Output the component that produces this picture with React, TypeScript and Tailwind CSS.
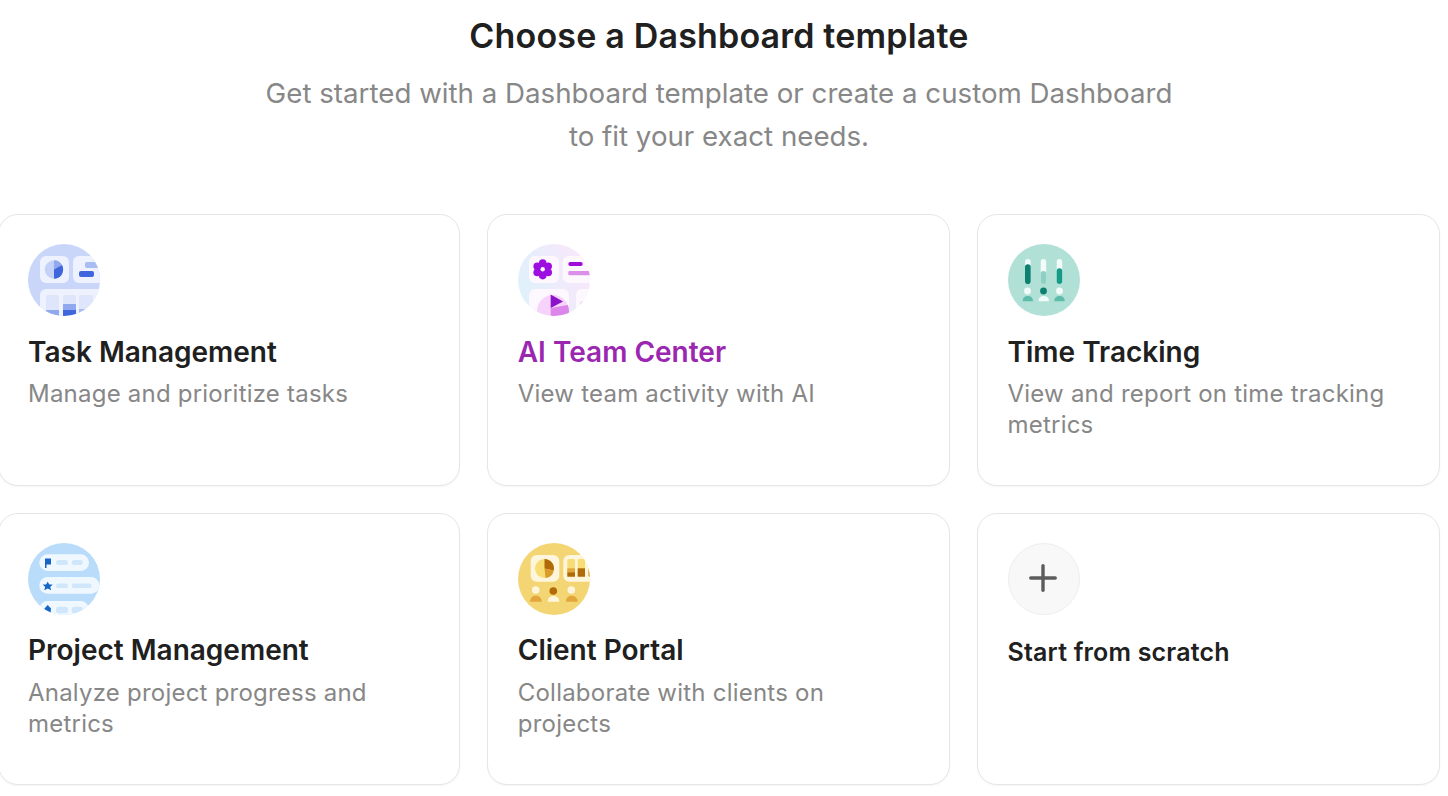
import React from 'react';
import { Plus } from 'lucide-react';

const IconFrame = ({ id, bg, children }: { id: string; bg: string; children: React.ReactNode }) => (
  <svg width="72" height="72" viewBox="0 0 72 72" className="block shrink-0">
    <defs>
      <clipPath id={`${id}-clip`}>
        <circle cx="36" cy="36" r="36" />
      </clipPath>
      <linearGradient id={`${id}-bg`} x1="0" y1="0.6" x2="1" y2="0.2">
        <stop offset="0" stopColor="#dff1fb" />
        <stop offset="1" stopColor="#fbe6fb" />
      </linearGradient>
    </defs>
    <g clipPath={`url(#${id}-clip)`}>
      <rect width="72" height="72" fill={bg} />
      {children}
    </g>
  </svg>
);

const TaskIcon = () => (
  <IconFrame id="task" bg="#c9d6fa">
    <rect x="12" y="12" width="29" height="27" rx="6" fill="#eef2fe" />
    <circle cx="26" cy="25.5" r="9.3" fill="#c5d2f7" />
    <path d="M26 25.5V16.2A9.3 9.3 0 0 1 34 21L26 25.5Z" fill="#8fa8ee" />
    <path d="M26 25.5L34 21A9.3 9.3 0 0 1 26 34.8Z" fill="#3f66dc" />
    <rect x="45" y="12" width="36" height="27" rx="6" fill="#eef2fe" />
    <rect x="57" y="18" width="14" height="6" rx="2" fill="#a9bcf3" />
    <rect x="51" y="27" width="15" height="6" rx="2" fill="#3f66dc" />
    <rect x="12" y="45" width="66" height="36" rx="6" fill="#eef2fe" />
    <rect x="18" y="51" width="13" height="24" rx="2" fill="#dfe6fc" />
    <rect x="18" y="66" width="13" height="9" fill="#8fa8ee" />
    <rect x="35" y="51" width="13" height="24" rx="2" fill="#dfe6fc" />
    <rect x="35" y="60" width="13" height="6" fill="#8fa8ee" />
    <rect x="35" y="66" width="13" height="9" fill="#3f66dc" />
    <rect x="51" y="51" width="14" height="24" rx="2" fill="#dfe6fc" />
    <rect x="51" y="65" width="14" height="10" fill="#a9bcf3" />
  </IconFrame>
);

const AiIcon = () => (
  <IconFrame id="ai" bg="url(#ai-bg)">
    <rect x="11" y="12" width="30" height="27" rx="6" fill="#fdf8fe" />
    <g fill="#9d0fe0">
      <circle cx="24.7" cy="19" r="3.8" />
      <circle cx="24.7" cy="31.6" r="3.8" />
      <circle cx="19.2" cy="22.2" r="3.8" />
      <circle cx="30.2" cy="22.2" r="3.8" />
      <circle cx="19.2" cy="28.4" r="3.8" />
      <circle cx="30.2" cy="28.4" r="3.8" />
      <circle cx="24.7" cy="25.3" r="5" />
    </g>
    <circle cx="24.7" cy="25.3" r="2.2" fill="#fdf8fe" />
    <rect x="44.7" y="12" width="36" height="27" rx="6" fill="#fdf8fe" />
    <rect x="50.3" y="18" width="14.4" height="4" rx="2" fill="#a00ad8" />
    <rect x="50.3" y="27" width="24" height="4.3" rx="1" fill="#db8fe8" />
    <rect x="11" y="45" width="40" height="36" rx="6" fill="#fdf8fe" />
    <circle cx="35" cy="67" r="16" fill="#f6d3fa" />
    <path d="M32.7 64V50.6L45 57.6Z" fill="#8b12c8" />
    <path d="M32.7 64L49.8 61A16 16 0 0 1 36 83H32.7Z" fill="#dc85ea" />
    <rect x="58" y="45" width="24" height="36" rx="6" fill="#fdf8fe" />
    <circle cx="65" cy="60" r="3" fill="#f6cdf8" />
  </IconFrame>
);

const TimeIcon = () => (
  <IconFrame id="time" bg="#b0e0d6">
    <rect x="17" y="15" width="5.7" height="25" rx="2.8" fill="#f2fbf9" />
    <rect x="17" y="20.3" width="5.7" height="19.7" rx="2.8" fill="#0d8070" />
    <rect x="32.7" y="15" width="5.5" height="25" rx="2.7" fill="#f2fbf9" />
    <rect x="32.7" y="27" width="5.5" height="13" rx="2.7" fill="#8ed0c3" />
    <rect x="48.7" y="15" width="5.5" height="25" rx="2.7" fill="#f2fbf9" />
    <rect x="48.7" y="24.3" width="5.5" height="15.7" rx="2.7" fill="#159a86" />
    <circle cx="19.5" cy="47" r="3.4" fill="#f2fbf9" />
    <path d="M14.7 57.2C14.7 53.5 16.8 52 19.8 52C22.8 52 25 53.5 25 57.2Z" fill="#5dbdaa" />
    <circle cx="35.5" cy="47" r="3.4" fill="#0d8070" />
    <path d="M30.5 57.2C30.5 53.5 32.8 52 35.7 52C38.6 52 41 53.5 41 57.2Z" fill="#f2fbf9" />
    <circle cx="51.5" cy="47" r="3.4" fill="#f2fbf9" />
    <path d="M46.3 57.2C46.3 53.5 48.5 52 51.5 52C54.5 52 56.7 53.5 56.7 57.2Z" fill="#5dbdaa" />
  </IconFrame>
);

const ProjectIcon = () => (
  <IconFrame id="project" bg="#b9dcfa">
    <rect x="11.3" y="11.3" width="49.7" height="16.7" rx="8.3" fill="#f0f8ff" />
    <path d="M17 15.5H23V21.5H18.5V25H17Z" fill="#1565c8" />
    <rect x="28" y="17" width="12" height="5" rx="2.5" fill="#cfe6fb" />
    <rect x="43.7" y="17" width="11" height="5" rx="2.5" fill="#cfe6fb" />
    <rect x="11.3" y="34" width="60" height="16.7" rx="8.3" fill="#f0f8ff" />
    <path d="M19.7 38.8L21.3 41.5H24.7L22.2 44L23.2 47.2L19.7 45.5L16.2 47.2L17.2 44L14.7 41.5H18.1Z" fill="#1565c8" />
    <rect x="28" y="40.5" width="12" height="4.5" rx="2.2" fill="#cfe6fb" />
    <rect x="43.7" y="40.5" width="20" height="4.5" rx="2.2" fill="#cfe6fb" />
    <rect x="11.3" y="58" width="49.7" height="16.7" rx="8.3" fill="#f0f8ff" />
    <path d="M19.7 62L23 65.5L22.5 70H17L16.5 65.5Z" fill="#1565c8" />
    <rect x="28" y="63.7" width="12" height="6.5" rx="2.5" fill="#cfe6fb" />
    <rect x="43.7" y="63.7" width="11" height="6.5" rx="2.5" fill="#cfe6fb" />
  </IconFrame>
);

const ClientIcon = () => (
  <IconFrame id="client" bg="#f3d574">
    <rect x="12.7" y="12" width="28.6" height="26.7" rx="6" fill="#fdf6dc" />
    <circle cx="26.5" cy="25.5" r="9.5" fill="#f8dd75" />
    <path d="M26.5 25.5V16A9.5 9.5 0 0 1 35.8 27.5Z" fill="#b06a08" />
    <path d="M26.5 25.5L35.8 27.5A9.5 9.5 0 0 1 27.5 35Z" fill="#d99b2b" />
    <rect x="45.3" y="12" width="36" height="26.7" rx="6" fill="#fdf6dc" />
    <rect x="49.3" y="16" width="7.7" height="17.7" rx="1.5" fill="#f8dd75" />
    <rect x="49.3" y="25.3" width="7.7" height="4" fill="#e0a93a" />
    <rect x="49.3" y="29.3" width="7.7" height="4.4" fill="#b06a08" />
    <rect x="59.7" y="16" width="7.3" height="17.7" rx="1.5" fill="#f8dd75" />
    <rect x="59.7" y="25.3" width="7.3" height="8.4" fill="#b06a08" />
    <rect x="70.3" y="16" width="6" height="17.7" rx="1.5" fill="#e0a93a" />
    <circle cx="17.7" cy="47" r="3.8" fill="#fdf6dc" />
    <path d="M12 58.7C12 54.5 14.8 52.7 17.8 52.7C20.8 52.7 23.7 54.5 23.7 58.7Z" fill="#e2a63c" />
    <circle cx="35.3" cy="48" r="3.8" fill="#b06a08" />
    <path d="M29.7 58.7C29.7 54.5 32.5 53 35.5 53C38.5 53 41.3 54.5 41.3 58.7Z" fill="#fdf6dc" />
    <circle cx="53.3" cy="47" r="3.8" fill="#fdf6dc" />
    <path d="M48 58.7C48 54.5 50.5 52.7 53.5 52.7C56.5 52.7 59.7 54.5 59.7 58.7Z" fill="#e2a63c" />
    <path d="M67 58.7C67 55 69 52.7 72 52.7V58.7Z" fill="#b06a08" />
  </IconFrame>
);

const templates = [
  { name: 'Task Management', desc: 'Manage and prioritize tasks', icon: <TaskIcon /> },
  { name: 'AI Team Center', desc: 'View team activity with AI', icon: <AiIcon />, accent: true },
  { name: 'Time Tracking', desc: 'View and report on time tracking metrics', icon: <TimeIcon /> },
  { name: 'Project Management', desc: 'Analyze project progress and metrics', icon: <ProjectIcon /> },
  { name: 'Client Portal', desc: 'Collaborate with clients on projects', icon: <ClientIcon /> },
];

const App = () => (
  <div className="h-[796px] w-[1448px] overflow-hidden bg-white font-['Inter',sans-serif] text-[#202020]">
    <div className="w-[1438px] pt-[14px] text-center">
      <h1 className="text-[34px] leading-[44px] font-semibold tracking-[0.18px]">Choose a Dashboard template</h1>
      <p className="mx-auto mt-[14px] w-[960px] text-[27.7px] leading-[43px] text-[#878787]">
        Get started with a Dashboard template or create a custom Dashboard
        <br />
        to fit your exact needs.
      </p>
    </div>

    <div className="mt-[56px] ml-[-2.5px] grid w-[1442px] grid-cols-3 gap-x-[27.25px] gap-y-[26.5px]">
      {templates.map((t) => (
        <div key={t.name} className="h-[272px] rounded-[20px] border border-[#e6e6e6] bg-white pt-[29px] pr-[44px] pl-[29.5px] shadow-[0_1px_2px_rgba(0,0,0,0.04)]">
          {t.icon}
          <div className={`mt-[16.75px] text-[28px] leading-[38px] font-semibold ${t.accent ? 'text-[#9b27b0]' : 'text-[#202020]'}`}>
            {t.name}
          </div>
          <div className="mt-[7.25px] text-[24px] leading-[31px] tracking-[0.22px] text-[#878787]">{t.desc}</div>
        </div>
      ))}
      <div className="h-[272px] rounded-[20px] border border-[#e6e6e6] bg-white pt-[29px] pr-[44px] pl-[29.5px] shadow-[0_1px_2px_rgba(0,0,0,0.04)]">
        <div className="flex h-[72px] w-[72px] items-center justify-center rounded-full border border-[#eeeeee] bg-[#f8f8f8] pr-[2px] pb-[1px]">
          <Plus size={42} strokeWidth={1.95} className="text-[#5c5c5c]" />
        </div>
        <div className="mt-[20.75px] text-[25px] leading-[34px] font-semibold tracking-[0.18px]">Start from scratch</div>
      </div>
    </div>
  </div>
);

export default App;
